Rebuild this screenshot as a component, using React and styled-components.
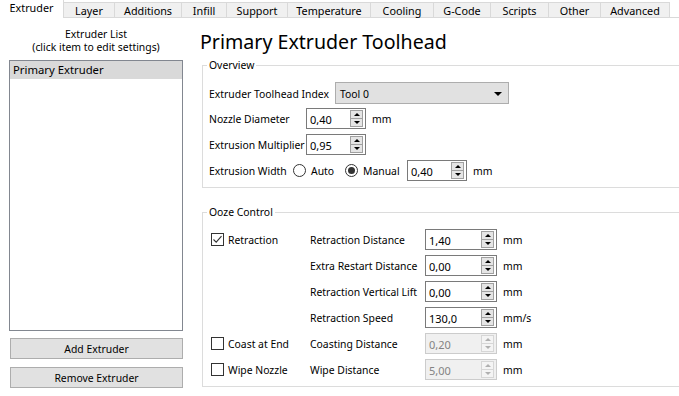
import React from "react";
import styled, { createGlobalStyle } from "styled-components";

const GlobalStyle = createGlobalStyle`
  html, body {
    margin: 0;
    padding: 0;
    background: #ffffff;
  }
  body {
    font-family: "Noto Sans", "DejaVu Sans", sans-serif;
    font-size: 10.4px;
    color: #000000;
  }
  * {
    box-sizing: border-box;
  }
`;

const TABS = [
  { name: "Extruder", w: 64 },
  { name: "Layer", w: 51 },
  { name: "Additions", w: 67 },
  { name: "Infill", w: 45 },
  { name: "Support", w: 61 },
  { name: "Temperature", w: 83 },
  { name: "Cooling", w: 63 },
  { name: "G-Code", w: 57 },
  { name: "Scripts", w: 58 },
  { name: "Other", w: 52 },
  { name: "Advanced", w: 69 },
];

const Spinner = ({ value, width, disabled }) => (
  <SpinBox $w={width} $disabled={disabled}>
    <SpinValue $disabled={disabled}>{value}</SpinValue>
    <SpinButtons>
      <SpinButton $disabled={disabled}>
        <ArrowUp $disabled={disabled} />
      </SpinButton>
      <SpinButton $disabled={disabled}>
        <ArrowDown $disabled={disabled} />
      </SpinButton>
    </SpinButtons>
  </SpinBox>
);

const Check = ({ checked, label }) => (
  <CheckLabel>
    <CheckBox>
      {checked && (
        <svg width="11" height="11" viewBox="0 0 11 11">
          <polyline
            points="1.5,5.5 4.2,8.2 9.5,2.2"
            fill="none"
            stroke="#333"
            strokeWidth="1.1"
          />
        </svg>
      )}
    </CheckBox>
    {label}
  </CheckLabel>
);

const Radio = ({ checked, label, width }) => (
  <RadioOption $w={width}>
    <RadioCircle>{checked && <RadioDot />}</RadioCircle>
    {label}
  </RadioOption>
);

const OOZE_ROWS = [
  { check: "Retraction", checked: true, label: "Retraction Distance", value: "1,40", unit: "mm" },
  { label: "Extra Restart Distance", value: "0,00", unit: "mm" },
  { label: "Retraction Vertical Lift", value: "0,00", unit: "mm" },
  { label: "Retraction Speed", value: "130,0", unit: "mm/s" },
  { check: "Coast at End", label: "Coasting Distance", value: "0,20", unit: "mm", disabled: true },
  { check: "Wipe Nozzle", label: "Wipe Distance", value: "5,00", unit: "mm", disabled: true },
];

const App = () => {
  return (
    <Window>
      <GlobalStyle />
      <TabBar>
        {TABS.map((t, i) => (
          <Tab key={t.name} $w={t.w} $active={i === 0}>
            {t.name}
          </Tab>
        ))}
      </TabBar>
      <Body>
        <LeftColumn>
          <ListHeader>
            Extruder List
            <br />
            (click item to edit settings)
          </ListHeader>
          <ListBox>
            <ListItem $selected>Primary Extruder</ListItem>
          </ListBox>
          <PushButton $top={7}>Add Extruder</PushButton>
          <PushButton $top={8}>Remove Extruder</PushButton>
        </LeftColumn>
        <RightColumn>
          <Heading>Primary Extruder Toolhead</Heading>
          <Group>
            <GroupTitle>Overview</GroupTitle>
            <FormRow $h={22}>
              <FieldLabel $w={126}>Extruder Toolhead Index</FieldLabel>
              <Combo>
                Tool 0
                <ComboArrow />
              </Combo>
            </FormRow>
            <FormRow $top={4}>
              <FieldLabel $w={97}>Nozzle Diameter</FieldLabel>
              <Spinner value="0,40" width={60} />
              <Unit>mm</Unit>
            </FormRow>
            <FormRow>
              <FieldLabel $w={97}>Extrusion Multiplier</FieldLabel>
              <Spinner value="0,95" width={60} />
            </FormRow>
            <FormRow>
              <FieldLabel $w={84}>Extrusion Width</FieldLabel>
              <Radio label="Auto" width={52} />
              <Radio label="Manual" width={62} checked />
              <Spinner value="0,40" width={60} />
              <Unit>mm</Unit>
            </FormRow>
          </Group>
          <Group $top={18}>
            <GroupTitle>Ooze Control</GroupTitle>
            <OozeGrid>
              {OOZE_ROWS.map((r) => (
                <React.Fragment key={r.label}>
                  <CheckCell>
                    {r.check && <Check label={r.check} checked={r.checked} />}
                  </CheckCell>
                  <GridLabel>{r.label}</GridLabel>
                  <Spinner value={r.value} width={72} disabled={r.disabled} />
                  <Unit>{r.unit}</Unit>
                </React.Fragment>
              ))}
            </OozeGrid>
          </Group>
        </RightColumn>
      </Body>
    </Window>
  );
};

const Window = styled.div`
  width: 679px;
  height: 396px;
  overflow: hidden;
  display: flex;
  flex-direction: column;
  background: #ffffff;
`;

const TabBar = styled.div`
  display: flex;
  align-items: flex-end;
  height: 18px;
  border-bottom: 1px solid #d9d9d9;
  flex-shrink: 0;
`;

const Tab = styled.div`
  width: ${(p) => p.$w}px;
  height: ${(p) => (p.$active ? 18 : 15)}px;
  margin-bottom: ${(p) => (p.$active ? -1 : 0)}px;
  background: ${(p) => (p.$active ? "#ffffff" : "#f0f0f0")};
  border-top: ${(p) => (p.$active ? "none" : "1px solid #d9d9d9")};
  border-right: 1px solid #d9d9d9;
  display: flex;
  align-items: center;
  justify-content: center;
  padding-bottom: ${(p) => (p.$active ? 3 : 0)}px;
  line-height: 13px;
  font-size: 10.8px;
  white-space: nowrap;
`;

const Body = styled.div`
  display: flex;
  flex: 1;
  min-height: 0;
`;

const LeftColumn = styled.div`
  width: 174px;
  margin-left: 9px;
  padding-top: 10px;
  display: flex;
  flex-direction: column;
  flex-shrink: 0;
`;

const ListHeader = styled.div`
  text-align: center;
  line-height: 13px;
  margin-bottom: 6px;
`;

const ListBox = styled.div`
  height: 271px;
  border: 1px solid #828790;
  padding: 0;
  background: #ffffff;
`;

const ListItem = styled.div`
  height: 18px;
  line-height: 18px;
  padding-left: 3px;
  background: ${(p) => (p.$selected ? "#d9d9d9" : "transparent")};
  font-size: 11.3px;
`;

const PushButton = styled.div`
  height: 21px;
  margin-top: ${(p) => p.$top}px;
  margin-left: 1px;
  background: #e1e1e1;
  border: 1px solid #adadad;
  display: flex;
  align-items: center;
  justify-content: center;
`;

const RightColumn = styled.div`
  flex: 1;
  margin-left: 17px;
  margin-right: -6px;
  min-width: 0;
`;

const Heading = styled.div`
  font-size: 19.6px;
  line-height: 24px;
  margin-top: 12px;
  margin-bottom: 5px;
  white-space: nowrap;
`;

const Group = styled.fieldset`
  margin: ${(p) => p.$top || 0}px 0 0 2px;
  padding: 0 0 6px 6px;
  border: 1px solid #dcdcdc;
  min-width: 0;
`;

const GroupTitle = styled.legend`
  padding: 0 2px;
  margin-left: -2px;
  line-height: 13px;
  margin-bottom: 10px;
`;

const FormRow = styled.div`
  display: flex;
  align-items: center;
  height: ${(p) => p.$h || 21}px;
  margin-top: ${(p) => p.$top ?? 5}px;
  &:first-of-type {
    margin-top: 0;
  }
`;

const FieldLabel = styled.div`
  width: ${(p) => p.$w}px;
  padding-top: 1px;
  white-space: nowrap;
  flex-shrink: 0;
`;

const Combo = styled.div`
  width: 174px;
  height: 22px;
  background: #e1e1e1;
  border: 1px solid #adadad;
  display: flex;
  align-items: center;
  justify-content: space-between;
  padding: 1px 6px 0 4px;
`;

const ComboArrow = styled.span`
  width: 0;
  height: 0;
  border-left: 4px solid transparent;
  border-right: 4px solid transparent;
  border-top: 4px solid #000;
`;

const SpinBox = styled.div`
  width: ${(p) => p.$w}px;
  height: 21px;
  border: 1px solid ${(p) => (p.$disabled ? "#cccccc" : "#7a7a7a")};
  background: ${(p) => (p.$disabled ? "#f0f0f0" : "#ffffff")};
  display: flex;
  align-items: stretch;
  flex-shrink: 0;
`;

const SpinValue = styled.div`
  flex: 1;
  padding: 1px 0 0 3px;
  display: flex;
  align-items: center;
  color: ${(p) => (p.$disabled ? "#838383" : "#000")};
  font-size: 11px;
`;

const SpinButtons = styled.div`
  width: 13px;
  margin: 1px 2px 1px 0;
  display: flex;
  flex-direction: column;
`;

const SpinButton = styled.div`
  flex: 1;
  border: 1px solid ${(p) => (p.$disabled ? "#d6d6d6" : "#a0a0a0")};
  background: ${(p) => (p.$disabled ? "#f4f4f4" : "#e5e5e5")};
  display: flex;
  align-items: center;
  justify-content: center;
  & + & {
    border-top: none;
  }
`;

const ArrowUp = styled.span`
  width: 0;
  height: 0;
  border-left: 3px solid transparent;
  border-right: 3px solid transparent;
  border-bottom: 3px solid ${(p) => (p.$disabled ? "#b0b0b0" : "#000")};
`;

const ArrowDown = styled.span`
  width: 0;
  height: 0;
  border-left: 3px solid transparent;
  border-right: 3px solid transparent;
  border-top: 3px solid ${(p) => (p.$disabled ? "#b0b0b0" : "#000")};
`;

const Unit = styled.div`
  margin-left: 6px;
  padding-top: 1px;
  white-space: nowrap;
  display: flex;
  align-items: center;
`;

const RadioOption = styled.div`
  width: ${(p) => p.$w}px;
  display: flex;
  align-items: center;
  gap: 5px;
  flex-shrink: 0;
  white-space: nowrap;
`;

const RadioCircle = styled.span`
  width: 13px;
  height: 13px;
  border-radius: 50%;
  border: 1px solid #333;
  background: #fff;
  display: flex;
  align-items: center;
  justify-content: center;
  flex-shrink: 0;
`;

const RadioDot = styled.span`
  width: 7px;
  height: 7px;
  border-radius: 50%;
  background: #333;
`;

const OozeGrid = styled.div`
  display: grid;
  grid-template-columns: 101px 115px 72px auto;
  grid-auto-rows: 21px;
  row-gap: 5px;
`;

const CheckCell = styled.div`
  display: flex;
  align-items: center;
  padding-left: 2px;
`;

const CheckLabel = styled.div`
  display: flex;
  align-items: center;
  gap: 4px;
  white-space: nowrap;
`;

const CheckBox = styled.span`
  width: 13px;
  height: 13px;
  border: 1px solid #333;
  background: #fff;
  display: flex;
  align-items: center;
  justify-content: center;
`;

const GridLabel = styled.div`
  display: flex;
  align-items: center;
  padding-top: 1px;
  white-space: nowrap;
`;

export default App;
